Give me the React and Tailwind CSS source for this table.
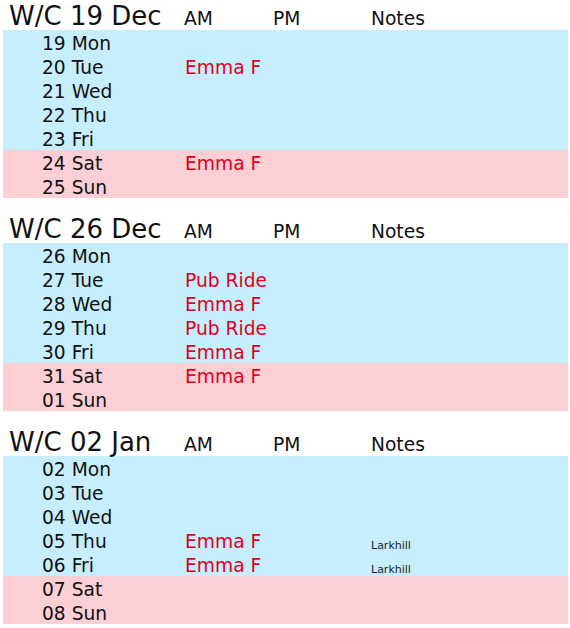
const weeks = [
  {
    title: "W/C 19 Dec",
    days: [
      ["19 Mon"],
      ["20 Tue", "Emma F"],
      ["21 Wed"],
      ["22 Thu"],
      ["23 Fri"],
      ["24 Sat", "Emma F"],
      ["25 Sun"],
    ],
  },
  {
    title: "W/C 26 Dec",
    days: [
      ["26 Mon"],
      ["27 Tue", "Pub Ride"],
      ["28 Wed", "Emma F"],
      ["29 Thu", "Pub Ride"],
      ["30 Fri", "Emma F"],
      ["31 Sat", "Emma F"],
      ["01 Sun"],
    ],
  },
  {
    title: "W/C 02 Jan",
    days: [
      ["02 Mon"],
      ["03 Tue"],
      ["04 Wed"],
      ["05 Thu", "Emma F", "", "Larkhill"],
      ["06 Fri", "Emma F", "", "Larkhill"],
      ["07 Sat"],
      ["08 Sun"],
    ],
  },
];

function Week({ week }) {
  return (
    <div className="mb-[15px]">
      <div className="flex items-baseline h-[30px] text-[18.67px] text-[#111]">
        <div className="w-[181px] pl-[6px] pt-[1px] text-[26px] leading-[30px]">{week.title}</div>
        <div className="w-[89px]">AM</div>
        <div className="w-[98px]">PM</div>
        <div>Notes</div>
      </div>
      {week.days.map(([day, am, pm, note], i) => (
        <div
          key={day}
          className={`flex items-baseline h-[24px] leading-[24px] text-[18.67px] ${
            i >= 5 ? "bg-[#fccfd4]" : "bg-[#c7eefd]"
          }`}
        >
          <div className="w-[182px] pl-[39px] pt-[2px] text-[#111]">{day}</div>
          <div className="w-[88px] text-[#e1001c]">{am}</div>
          <div className="w-[98px] text-[#e1001c]">{pm}</div>
          {note && <div className="text-[11px] text-[#222] translate-y-[1px]">{note}</div>}
        </div>
      ))}
    </div>
  );
}

export default function App() {
  return (
    <div className="min-h-screen bg-white" style={{ fontFamily: '"DejaVu Sans", Verdana, sans-serif' }}>
      <div className="ml-[3px] w-[565px]">
        {weeks.map((w) => (
          <Week key={w.title} week={w} />
        ))}
      </div>
    </div>
  );
}
